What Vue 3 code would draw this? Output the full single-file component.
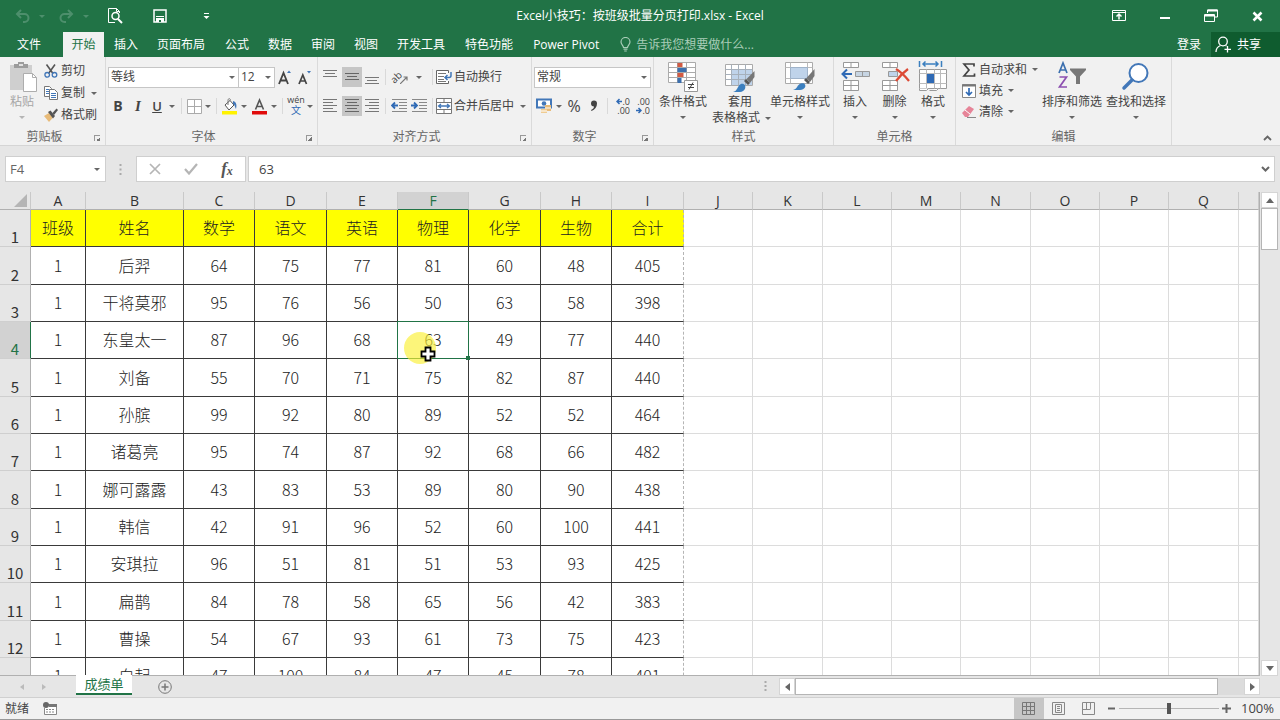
<script setup>
import { ref } from 'vue'

const tabs = ['插入', '页面布局', '公式', '数据', '审阅', '视图', '开发工具', '特色功能', 'Power Pivot']
const letters = 'ABCDEFGHIJKLMNOPQ'.split('')
const heads = ['班级', '姓名', '数学', '语文', '英语', '物理', '化学', '生物', '合计']
const rows = [
  [1, '后羿', 64, 75, 77, 81, 60, 48, 405],
  [1, '干将莫邪', 95, 76, 56, 50, 63, 58, 398],
  [1, '东皇太一', 87, 96, 68, 63, 49, 77, 440],
  [1, '刘备', 55, 70, 71, 75, 82, 87, 440],
  [1, '孙膑', 99, 92, 80, 89, 52, 52, 464],
  [1, '诸葛亮', 95, 74, 87, 92, 68, 66, 482],
  [1, '娜可露露', 43, 83, 53, 89, 80, 90, 438],
  [1, '韩信', 42, 91, 96, 52, 60, 100, 441],
  [1, '安琪拉', 96, 51, 81, 51, 53, 93, 425],
  [1, '扁鹊', 84, 78, 58, 65, 56, 42, 383],
  [1, '曹操', 54, 67, 93, 61, 73, 75, 423],
  [1, '白起', 47, 100, 84, 47, 45, 78, 401]
]
const all = [heads, ...rows]
const cellName = ref('F4')
const formula = ref('63')
const zoom = ref(50)
</script>

<template>
  <div class="app">
    <header class="title">
      <div class="quick">
        <button class="dim" aria-label="撤销"><svg width="16" height="14" viewBox="0 0 16 14"><path d="M6 1 2 5l4 4M2 5h7.500a4 4 0 0 1 0 8H8" fill="none" stroke="currentColor" stroke-width="2" /></svg></button>
        <button class="dim" aria-label="撤销选项"><i class="caret"></i></button>
        <button class="dim" aria-label="恢复"><svg width="16" height="14" viewBox="0 0 16 14"><path d="m10 1 4 4-4 4M14 5H6.500a4 4 0 0 0 0 8H8" fill="none" stroke="currentColor" stroke-width="2" /></svg></button>
        <button class="dim" aria-label="恢复选项"><i class="caret"></i></button>
        <button aria-label="打印预览"><svg width="16" height="16" viewBox="0 0 16 16" fill="none" stroke="#fff"><path d="M12.500 5V3.500L9.500.5h-8v14H8M9.500.5v3h3" /><circle cx="8.500" cy="8" r="3.500" stroke-width="1.500" /><path d="m11 11 4 4" stroke-width="2" /></svg></button>
        <button aria-label="保存"><svg width="14" height="14" viewBox="0 0 14 14"><path d="M1 1h12v12H1z" fill="none" stroke="#fff" stroke-width="1.500" /><path d="M3 7.500h8" stroke="#fff" /><path d="M3 13V9h8v4z" fill="#fff" /><path d="M6 11h2v2H6z" fill="#217346" /></svg></button>
        <button aria-label="自定义快速访问工具栏"><svg width="7" height="7" viewBox="0 0 7 7"><path d="M1 .5h5" stroke="#fff" /><path d="M.5 3h6l-3 3z" fill="#fff" /></svg></button>
      </div>
      <h1>Excel小技巧：按班级批量分页打印.xlsx - Excel</h1>
      <div class="win">
        <button aria-label="功能区显示选项"><svg width="14" height="12" viewBox="0 0 14 12" fill="none" stroke="#fff"><path d="M.5.5h13v10H.5zM.5 2.500h13" /><path d="M7 9.500V5M4.500 6.500 7 4l2.500 2.500" stroke-width="1.500" /></svg></button>
        <button aria-label="最小化"><svg width="12" height="12" viewBox="0 0 12 12"><path d="M1 8h10" stroke="#fff" stroke-width="2" /></svg></button>
        <button aria-label="还原"><svg width="14" height="14" viewBox="0 0 14 14" fill="none" stroke="#fff"><path d="M3.500 4V1h10v7h-3" /><path d="M3.500 1.500h10M1 6.500h9" stroke-width="2" /><path d="M.5 5.500h10v7H.5z" /></svg></button>
        <button aria-label="关闭"><svg width="11" height="11" viewBox="0 0 11 11"><path d="m1.500 1.500 8 8m0-8-8 8" stroke="#fff" stroke-width="2.500" /></svg></button>
      </div>
    </header>

    <nav class="tabs">
      <button class="file">文件</button>
      <button class="active">开始</button>
      <button v-for="t in tabs" :key="t" :class="{ wide: t.length > 2 }">{{ t }}</button>
      <label class="tell">
        <svg width="11" height="15" viewBox="0 0 11 15" fill="none" stroke="#a9cdb8" stroke-width="1.200"><path d="M3.500 10.500C3.500 8.500 1 7.500 1 5a4.500 4.500 0 0 1 9 0c0 2.500-2.500 3.500-2.500 5.500zM3.500 12.200h4M4.200 14h2.600" /></svg>
        <input type="text" placeholder="告诉我您想要做什么..." />
      </label>
      <button class="login">登录</button>
      <button class="share"><svg width="17" height="17" viewBox="0 0 17 17" fill="none" stroke="#fff" stroke-width="1.300"><circle cx="8" cy="5.500" r="4.300" /><path d="M1 16c0-4 2-5.500 4.500-6.500M10.500 9.500l1 .5M12.500 10v6.500M9.500 13.300h6.500" /></svg>共享</button>
    </nav>

    <section class="ribbon">
      <div class="group g-clip">
        <div class="body">
          <button class="big paste" disabled>
            <svg width="30" height="32" viewBox="0 0 30 32"><path d="M3 4h22v25H3z" fill="#cfcfcf" /><path d="M7 3h4V1h6v2h4v4H7z" fill="#9c9c9c" /><path d="M12 3h4v2h-4z" fill="#e0e0e0" /><path d="M16.500 12.500h9l4 4v14h-13z" fill="#fff" stroke="#adadad" /><path d="M25.500 12.500v4h4" fill="none" stroke="#adadad" /></svg>
            <span>粘贴</span><i class="caret"></i>
          </button>
          <div class="stack">
            <button><svg width="14" height="14" viewBox="0 0 14 14" fill="none"><path d="m2.500.5 6.500 9M11 .5l-6.500 9" stroke="#555" stroke-width="1.600" /><circle cx="3.200" cy="10.800" r="2.300" stroke="#4277b8" stroke-width="1.300" /><circle cx="10.500" cy="10.800" r="2.300" stroke="#4277b8" stroke-width="1.300" /></svg>剪切</button>
            <button><svg width="14" height="14" viewBox="0 0 14 14" fill="#fff" stroke="#777"><path d="M.5.5h5l2 2v8h-7z" /><path d="M2 3.500h3M2 5.500h3M2 7.500h3" stroke="#4277b8" /><path d="M5.500 3.500h5l3 3v7h-8z" /><path d="M7 7.500h5M7 9.500h5M7 11.500h5" stroke="#4277b8" /></svg>复制<i class="caret"></i></button>
            <button><svg width="14" height="14" viewBox="0 0 14 14"><path d="m0 8 5-3 4 4.500L5 14z" fill="#e8bb79" /><path d="m4 4 2.500-1.500 4.500 5.500-2 2.500z" fill="#555" /><path d="m8.500 5 4-4.500L14 2l-4 5z" fill="#555" /></svg>格式刷</button>
          </div>
        </div>
        <footer>剪贴板<button class="launch" aria-label="剪贴板设置"></button></footer>
      </div>

      <div class="group g-font">
        <div class="body col">
          <div class="row r-font">
            <span class="pick"><select aria-label="字体"><option>等线</option></select><i class="caret"></i></span>
            <span class="pick"><select aria-label="字号"><option>12</option></select><i class="caret"></i></span>
            <button aria-label="增大字号"><svg width="14" height="15" viewBox="0 0 14 15"><path d="M1 14 5.500 3 10 14M2.500 10.500h6" fill="none" stroke="#444" stroke-width="1.800" /><path d="m9 3 2-2.500L13 3z" fill="#4277b8" /></svg></button>
            <button aria-label="减小字号"><svg width="14" height="15" viewBox="0 0 14 15"><path d="M1 14 4.800 5 8.500 14M2.500 11h5" fill="none" stroke="#444" stroke-width="1.700" /><path d="m9 1 2 2.500L13 1z" fill="#4277b8" /></svg></button>
          </div>
          <div class="row r-style">
            <button class="b">B</button><button class="i">I</button><button class="u">U</button><button aria-label="下划线选项"><i class="caret"></i></button><hr />
            <button aria-label="边框"><svg width="15" height="15" viewBox="0 0 15 15"><path d="M.5.5h14v14H.5z" fill="#fff" stroke="#aaa" /><path d="M7.500 0v15M0 7.500h15" stroke="#aaa" /></svg></button><button aria-label="边框选项"><i class="caret"></i></button><hr />
            <button aria-label="填充颜色"><svg width="17" height="17" viewBox="0 0 17 17"><path d="M1 13h15v3.500H1z" fill="#fff200" /><path d="m4 7 5-4.500 4 4.500-5 5z" fill="#fff" stroke="#555" /><path d="M7 7V2.500C7 0 9.500 0 9.500 2.500" fill="none" stroke="#777" /><path d="M12 3c3.500 1 4 4 3 8-1-2-1.500-5-3-5z" fill="#4277b8" /></svg></button><button aria-label="填充选项"><i class="caret"></i></button>
            <button aria-label="字体颜色"><svg width="17" height="17" viewBox="0 0 17 17"><path d="M1 13h15v3.500H1z" fill="#e00b0b" /><path d="M4.500 11.500 8.500 2l4 9.500M5.500 8.500h6" fill="none" stroke="#555" stroke-width="1.600" /></svg></button><button aria-label="字体颜色选项"><i class="caret"></i></button><hr />
            <button class="wen"><span>wén</span><b>文</b></button><button aria-label="拼音选项"><i class="caret"></i></button>
          </div>
        </div>
        <footer>字体<button class="launch" aria-label="字体设置"></button></footer>
      </div>

      <div class="group g-align">
        <div class="body col">
          <div class="row r-align">
            <button aria-label="顶端对齐"><svg width="14" height="16" viewBox="0 0 14 16"><path d="M0 1.500h14M2 4.500h10M0 7.500h14" stroke="#777" /></svg></button>
            <button class="on" aria-label="垂直居中"><svg width="14" height="16" viewBox="0 0 14 16"><path d="M0 4.500h14M2 7.500h10M0 10.500h14" stroke="#666" /></svg></button>
            <button aria-label="底端对齐"><svg width="14" height="16" viewBox="0 0 14 16"><path d="M0 8.500h14M2 11.500h10M0 14.500h14" stroke="#777" /></svg></button><hr />
            <button class="ab"><span>ab</span><svg width="8" height="8" viewBox="0 0 8 8"><path d="m0 8 7-7M3.500 1H7v3.500" fill="none" stroke="#777" stroke-width="1.200" /></svg></button><button aria-label="方向选项"><i class="caret"></i></button><hr />
            <button class="txt"><svg width="16" height="16" viewBox="0 0 16 16" fill="none" stroke="#666"><path d="M12.500 4V1.500H.5v13h12V12" fill="#fff" /><path d="M2 4.500h8M2 7.500h6M2 10.500h6M2 12.500h8" stroke="#777" /><path d="M15 3v3.500q0 2-2 2H9.500M11.500 6 9 8.500l2.500 2.500" stroke="#4277b8" stroke-width="1.500" /></svg>自动换行</button>
          </div>
          <div class="row r-align">
            <button aria-label="左对齐"><svg width="14" height="16" viewBox="0 0 14 16"><path d="M0 1.500h14M0 4.500h10M0 7.500h14M0 10.500h10M0 13.500h14" stroke="#777" /></svg></button>
            <button class="on" aria-label="居中"><svg width="14" height="16" viewBox="0 0 14 16"><path d="M0 1.500h14M2 4.500h10M0 7.500h14M2 10.500h10M0 13.500h14" stroke="#666" /></svg></button>
            <button aria-label="右对齐"><svg width="14" height="16" viewBox="0 0 14 16"><path d="M0 1.500h14M4 4.500h10M0 7.500h14M4 10.500h10M0 13.500h14" stroke="#777" /></svg></button><hr />
            <button aria-label="减少缩进"><svg width="16" height="16" viewBox="0 0 16 16"><path d="M1 1.500h15M8 4.500h8M8 7.500h8M8 10.500h8M1 13.500h15" stroke="#888" /><path d="M7 7.500H1M4 4.500l-3 3 3 3" fill="none" stroke="#2f6ab5" stroke-width="1.800" /></svg></button>
            <button aria-label="增加缩进"><svg width="16" height="16" viewBox="0 0 16 16"><path d="M1 1.500h15M8 4.500h8M8 7.500h8M8 10.500h8M1 13.500h15" stroke="#888" /><path d="M0 7.500h6M3 4.500l3 3-3 3" fill="none" stroke="#2f6ab5" stroke-width="1.800" /></svg></button><hr />
            <button class="txt"><svg width="16" height="16" viewBox="0 0 16 16" fill="none" stroke="#777"><path d="M.5.5h15v15H.5z" fill="#fff" /><path d="M0 4.500h16M0 11.500h16M8 0v4.500M8 11.500V16" /><path d="M2.500 8h11M5 6 2.500 8 5 10M11 6l2.500 2-2.500 2" stroke="#4277b8" stroke-width="1.300" /></svg>合并后居中</button>
            <button aria-label="合并选项"><i class="caret"></i></button>
          </div>
        </div>
        <footer>对齐方式<button class="launch" aria-label="对齐设置"></button></footer>
      </div>

      <div class="group g-num">
        <div class="body col">
          <div class="row r-fmt"><span class="pick"><select aria-label="数字格式"><option>常规</option></select><i class="caret"></i></span></div>
          <div class="row r-num">
            <button aria-label="会计格式"><svg width="16" height="16" viewBox="0 0 16 16"><path d="M1 1.500h14v8H1z" fill="#fff" stroke="#4277b8" stroke-width="2" /><circle cx="8" cy="5.500" r="2.300" fill="#4277b8" /><path d="M9 7h6v6H9z" fill="#e8bb79" /><path d="M5 11h6v4H5z" fill="#efcb91" /><path d="M5 13h6M9 10h6" stroke="#fff" /></svg></button><button aria-label="会计格式选项"><i class="caret"></i></button>
            <button class="pct">%</button>
            <button aria-label="千位分隔"><svg width="8" height="12" viewBox="0 0 8 12"><path d="M1 3.500a3 3 0 0 1 6 0c0 3.500-2 6-5.500 7.500L1 10c2-1 3-2 3-3.500A3 3 0 0 1 1 3.500z" fill="#444" /></svg></button><hr />
            <button class="dec"><span><svg width="6" height="7" viewBox="0 0 6 7"><path d="M6 3.500H1M3.500 1 1 3.500 3.500 6" fill="none" stroke="#2f6ab5" stroke-width="1.500" /></svg>.0</span><span>.00</span></button>
            <button class="dec"><span>.00</span><span><svg width="6" height="7" viewBox="0 0 6 7"><path d="M0 3.500h5M2.500 1 5 3.500 2.500 6" fill="none" stroke="#2f6ab5" stroke-width="1.500" /></svg>.0</span></button>
          </div>
        </div>
        <footer>数字<button class="launch" aria-label="数字设置"></button></footer>
      </div>

      <div class="group g-sty">
        <div class="body">
          <button class="big"><svg width="30" height="32" viewBox="0 0 30 32"><path d="M.5 1.500h27v20H.5z" fill="#fff" stroke="#aaa" /><path d="M.5 6.500h27M.5 11.500h27M.5 16.500h27M9.500 1.500v20M18.500 1.500v20" stroke="#aaa" /><path d="M9.500 2h5v4h-5zM9.500 12h6v4h-6z" fill="#d15a43" /><path d="M9.500 7h9v4h-9zM9.500 17h4v5h-4z" fill="#3b6fae" /><path d="M16.500 19.500h13v11h-13z" fill="#fff" stroke="#999" /><path d="M20 23.500h6M20 26.500h6M25 21.500l-4 7" stroke="#444" /></svg><span>条件格式</span><i class="caret"></i></button>
          <button class="big"><svg width="30" height="32" viewBox="0 0 30 32"><path d="M.5 3.500h27v21H.5z" fill="#fff" stroke="#aaa" /><path d="M7 9h20v15H7z" fill="#bfd3ea" /><path d="M.5 8.500h27M.5 13.500h27M.5 18.500h27M6.500 3.500v21M13.500 3.500v21M20.500 3.500v21" stroke="#a6b0bb" /><path d="m29.500 10-8 8 3.500 4 4.500-6z" fill="#777" /><path d="m21 18 4 4-2 2-4-4z" fill="#555" /><path d="M8 31c4-1 4-4 6-6.500s5-2 6 0 0 6-5 6.500z" fill="#3b7fbf" /></svg><span>套用</span><span>表格格式<i class="caret"></i></span></button>
          <button class="big"><svg width="30" height="32" viewBox="0 0 30 32"><path d="M.5 1.500h27v21H.5z" fill="#fff" stroke="#aaa" /><path d="M.5 6.500h27M.5 17.500h27M5.500 1.500v21M22.500 1.500v21" stroke="#bbb" /><path d="M5.500 6.500h17v11h-17z" fill="#bfd3ea" stroke="#9fb3ca" /><path d="m29.500 8-8 9 3.500 4 4.500-6z" fill="#777" /><path d="m21 17 4 4-2 2-4-4z" fill="#555" /><path d="M8 29c4-1 4-4 6-5.500s5-2 6 0 0 5-5 5.500z" fill="#3b7fbf" /></svg><span>单元格样式</span><i class="caret"></i></button>
        </div>
        <footer>样式</footer>
      </div>

      <div class="group g-cells">
        <div class="body">
          <button class="big"><svg width="30" height="32" viewBox="0 0 30 32" fill="#fff" stroke="#999"><path d="M3.500 1.500h15v5h-15zM3.500 19.500h15v10h-15zM3.500 24.500h15M11 1.500v5M11 19.500v10" /><path d="M15.500 10.500h14v5h-14z" fill="#c7d5e3" /><path d="M22.500 10.500v5" /><path d="M12 13H3M7 8.500 2.500 13 7 17.500" fill="none" stroke="#2f6ab5" stroke-width="2" /></svg><span>插入</span><i class="caret"></i></button>
          <button class="big"><svg width="30" height="32" viewBox="0 0 30 32" fill="#fff" stroke="#999"><path d="M2.500 1.500h15v5h-15zM2.500 19.500h15v10h-15zM2.500 24.500h15M10 1.500v5M10 19.500v10" /><path d="M8.500 10.500h9v5h-9z" fill="#bfd3ea" /><path d="M16 8c5 3 9 7 13 12M28 8C24 11 19 16 16 20" fill="none" stroke="#dc4a35" stroke-width="2.200" /></svg><span>删除</span><i class="caret"></i></button>
          <button class="big"><svg width="30" height="32" viewBox="0 0 30 32" fill="#fff" stroke="#999"><path d="M1.500 8.500h27v19h-27z" /><path d="M1.500 12.500h27M1.500 22.500h27M8.500 8.500v19M16.500 8.500v19M22.500 8.500v19" stroke="#bbb" /><path d="M9 13h7v9H9z" fill="#2f6ab5" stroke="none" /><path d="M1.500 27.500v2h7l2-2M11.500 29.500h7l2-2" /><path d="M1.500 0v6M23.500 0v6M5 3h15M7.500.5 5 3l2.500 2.500M17.500.5 20 3l-2.500 2.500" fill="none" stroke="#3b7fbf" stroke-width="1.500" /></svg><span>格式</span><i class="caret"></i></button>
        </div>
        <footer>单元格</footer>
      </div>

      <div class="group g-edit">
        <div class="body">
          <div class="stack">
            <button><svg width="14" height="14" viewBox="0 0 14 14"><path d="M12 3.500V1H2l5 6-5 6h10.500v-2.500" fill="none" stroke="#444" stroke-width="1.700" /></svg>自动求和<i class="caret far"></i></button>
            <button><svg width="14" height="14" viewBox="0 0 14 14"><path d="M.5.5h13v13H.5z" fill="#fff" stroke="#888" /><path d="M0 1.500h14" stroke="#777" stroke-width="2" /><path d="M7 4v7M4 8l3 3 3-3" fill="none" stroke="#2f6ab5" stroke-width="1.700" /></svg>填充<i class="caret"></i></button>
            <button><svg width="14" height="14" viewBox="0 0 14 14"><path d="m0 8 7-7 5 3-6 8H3z" fill="#e68498" /><path d="m3 5 5 4" stroke="#fff" /><path d="M5 12.500h9" stroke="#888" /></svg>清除<i class="caret"></i></button>
          </div>
          <button class="big"><svg width="30" height="32" viewBox="0 0 30 32"><path d="M2 12 6 2l4 10M3.500 9h5" fill="none" stroke="#3b6fae" stroke-width="1.700" /><path d="M2.500 16h7L2.500 26h7.500" fill="none" stroke="#8c4fb0" stroke-width="1.700" /><path d="M13 7.500h16v1.500l-6 6.500V23h-4v-7.500L13 9z" fill="#777" /></svg><span>排序和筛选</span><i class="caret"></i></button>
          <button class="big"><svg width="30" height="32" viewBox="0 0 30 32"><circle cx="17.500" cy="12" r="9" fill="#fff" stroke="#4277b8" stroke-width="2" /><path d="m11 19-8 8" stroke="#4277b8" stroke-width="3.500" stroke-linecap="round" /></svg><span>查找和选择</span><i class="caret"></i></button>
        </div>
        <footer>编辑</footer>
      </div>
      <button class="collapse" aria-label="折叠功能区"><svg width="9" height="6" viewBox="0 0 9 6"><path d="M1 5 4.500 1.500 8 5" fill="none" stroke="#666" stroke-width="1.800" /></svg></button>
    </section>

    <section class="fbar">
      <div class="name"><input v-model="cellName" aria-label="名称框" /><button aria-label="名称列表"><i class="caret"></i></button></div>
      <svg class="dots" width="3" height="13" viewBox="0 0 3 13"><path d="M.5 1h2v2h-2zM.5 5.500h2v2h-2zM.5 10h2v2h-2z" fill="#aaa" /></svg>
      <div class="fx">
        <button aria-label="取消"><svg width="12" height="12" viewBox="0 0 12 12"><path d="m1 1 10 10M11 1 1 11" stroke="#b5b5b5" stroke-width="1.700" /></svg></button>
        <button aria-label="输入"><svg width="14" height="12" viewBox="0 0 14 12"><path d="m1 6 4 4.500L13 1" fill="none" stroke="#b5b5b5" stroke-width="2.200" /></svg></button>
        <button class="fn">f<small>x</small></button>
      </div>
      <div class="formula"><input v-model="formula" aria-label="编辑栏" /><button aria-label="展开编辑栏"><svg width="9" height="6" viewBox="0 0 9 6"><path d="M1 1 4.500 4.500 8 1" fill="none" stroke="#666" stroke-width="2" /></svg></button></div>
    </section>

    <main class="work">
      <div class="sheet">
        <table>
          <colgroup><col class="c-num" /><col class="c-a" /><col class="c-b" /><col v-for="n in 7" :key="n" class="c-s" :class="{ plus: n === 2 || n === 5 || n === 7 }" /><col v-for="n in 8" :key="'e' + n" class="c-e" :class="{ plus: n === 2 || n === 5 || n === 8 }" /><col /></colgroup>
          <thead><tr>
            <th class="corner"><svg width="14" height="13" viewBox="0 0 14 13"><path d="M13 0v13H0z" fill="#b5b5b5" /></svg></th>
            <th v-for="l in letters" :key="l" :class="{ sel: l === 'F' }">{{ l }}</th><th></th>
          </tr></thead>
          <tbody>
            <tr v-for="(r, ri) in all" :key="ri" :class="{ top: ri === 0 }">
              <th :class="{ sel: ri === 3 }">{{ ri < 12 ? ri + 1 : '' }}</th>
              <td v-for="(v, ci) in r" :key="ci" class="d">{{ v }}<template v-if="ri === 3 && ci === 5"><span class="pickbox"></span><span class="halo"></span><svg class="cross" width="16" height="16" viewBox="0 0 16 16"><path d="M5.500 1.500h5v4h4v5h-4v4h-5v-4h-4v-5h4z" fill="#fff" stroke="#000" stroke-width="1.800" /></svg></template></td>
              <td v-for="n in 9" :key="'x' + n"></td>
            </tr>
          </tbody>
        </table>
      </div>
      <div class="vbar"><button aria-label="向上滚动"><svg width="8" height="5" viewBox="0 0 8 5"><path d="m0 5 4-5 4 5z" fill="#666" /></svg></button><div class="vthumb"></div><button class="down" aria-label="向下滚动"><svg width="8" height="5" viewBox="0 0 8 5"><path d="m0 0 4 5 4-5z" fill="#666" /></svg></button></div>
    </main>

    <section class="sheets">
      <button class="nav" aria-label="上一个工作表"><svg width="4" height="6" viewBox="0 0 4 6"><path d="M4 0v6L0 3z" fill="#bbb" /></svg></button>
      <button class="nav" aria-label="下一个工作表"><svg width="4" height="6" viewBox="0 0 4 6"><path d="M0 0v6l4-3z" fill="#bbb" /></svg></button>
      <button class="tab">成绩单</button>
      <button class="add" aria-label="新工作表"><svg width="14" height="14" viewBox="0 0 14 14" fill="none" stroke="#777"><circle cx="7" cy="7" r="6.300" /><path d="M7 3.500v7M3.500 7h7" stroke-width="1.500" /></svg></button>
      <svg class="dots2" width="3" height="11" viewBox="0 0 3 11"><path d="M.5 0h2v2h-2zM.5 4h2v2h-2zM.5 8h2v2h-2z" fill="#aaa" /></svg>
      <div class="hbar"><button aria-label="向左滚动"><svg width="5" height="8" viewBox="0 0 5 8"><path d="M5 0v8L0 4z" fill="#666" /></svg></button><div class="hthumb"></div><button class="right" aria-label="向右滚动"><svg width="5" height="8" viewBox="0 0 5 8"><path d="M0 0v8l5-4z" fill="#666" /></svg></button></div>
    </section>

    <footer class="status">
      <span class="ready">就绪</span>
      <button aria-label="录制宏"><svg width="14" height="13" viewBox="0 0 14 13"><path d="M3.500 2.500h10v10h-12V6" fill="#fff" stroke="#888" /><path d="M6 3.500h8" stroke="#777" stroke-width="3" /><path d="M3 7.500h9M3 10h9" stroke="#888" stroke-dasharray="2 1" /><circle cx="3" cy="3" r="3" fill="#666" /></svg></button>
      <div class="views">
        <button class="on" aria-label="普通"><svg width="13" height="13" viewBox="0 0 13 13"><path d="M.5.5h12v12H.5zM4.500 0v13M8.500 0v13M0 4.500h13M0 8.500h13" fill="none" stroke="#777" /></svg></button>
        <button aria-label="页面布局视图"><svg width="13" height="13" viewBox="0 0 13 13"><path d="M.5.5h12v12H.5zM3.500 2.500h6v8h-6zM5 4.500h3M5 6.500h3M5 8.500h3" fill="none" stroke="#888" /></svg></button>
        <button aria-label="分页预览"><svg width="13" height="13" viewBox="0 0 13 13"><path d="M.5.5h12v12H.5zM4.500 0v7M8.500 0v7M.5 7.500h8" fill="none" stroke="#888" /></svg></button>
      </div>
      <button class="step" aria-label="缩小"><svg width="9" height="9" viewBox="0 0 9 9"><path d="M1 4.500h7" stroke="#666" stroke-width="2" /></svg></button>
      <input v-model="zoom" type="range" min="0" max="100" aria-label="显示比例" />
      <button class="step" aria-label="放大"><svg width="9" height="9" viewBox="0 0 9 9"><path d="M0 4.500h9M4.500 0v9" stroke="#666" stroke-width="2" /></svg></button>
      <button class="percent">100%</button>
    </footer>
  </div>
</template>

<style>
body { margin: 0; overflow: hidden; }
</style>

<style scoped>
* { box-sizing: border-box; }
.app { height: 100vh; display: flex; flex-direction: column; background: #e6e6e6; color: #444; font: 12px/16px "Open Sans", "Noto Sans CJK SC", sans-serif; overflow: hidden; }
button { display: flex; align-items: center; justify-content: center; padding: 0; margin: 0; border: 0; background: none; color: inherit; font: inherit; white-space: nowrap; }
input, select { font: inherit; color: inherit; border: 0; outline: 0; padding: 0; margin: 0; background: transparent; min-width: 0; }
svg { display: block; flex: none; }
.caret { flex: none; display: inline-block; border: 3px solid transparent; border-top-color: #666; border-bottom: 0; }

.title { flex: none; height: 32px; display: grid; grid-template-columns: 1fr auto 1fr; align-items: center; background: #217346; color: #fff; }
.title h1 { margin: 0; font-size: 12px; font-weight: 400; }
.quick { display: grid; grid-template-columns: 18px 20px 28px 12px 46px 44px 48px; padding-left: 14px; }
.dim { color: #4d8f6c; }
.dim .caret { border-top-color: #4d8f6c; }
.win { justify-self: end; display: flex; }
.win button { width: 46px; height: 32px; }

.tabs { flex: none; height: 25px; display: flex; align-items: stretch; background: #217346; color: #fff; }
.tabs button { padding: 0 9px 0 10px; }
.tabs .wide { padding: 0 10px; }
.tabs .file { width: 63px; padding: 0 5px 0 0; }
.tabs .active { width: 41px; padding: 0; background: #f1f1f1; color: #217346; }
.tell { flex: 1; display: flex; align-items: center; gap: 5px; margin-left: 11px; }
.tell input { flex: 1; }
.tell input::placeholder { color: #a9cdb8; opacity: 1; }
.tabs .login { padding: 0 10px; }
.tabs .share { width: 69px; gap: 5px; padding: 0 15px 0 0; background: #0f5c2f; }

.ribbon { flex: none; height: 89px; display: flex; background: #f1f1f1; border-bottom: 1px solid #d5d5d5; }
.group { flex: none; display: flex; flex-direction: column; border-right: 1px solid #dadada; }
.group > footer { position: relative; height: 18px; display: flex; align-items: center; justify-content: center; color: #666; padding-right: 16px; }
.g-sty > footer, .g-cells > footer, .g-edit > footer { padding-right: 0; }
.body { height: 70px; display: flex; }
.group > footer { padding-top: 1px; }
.g-clip { width: 106px; }
.g-font { width: 212px; }
.g-align { width: 214px; }
.g-num { width: 122px; }
.g-sty { width: 180px; }
.g-cells { width: 122px; }
.g-edit { width: 216px; }
.launch { position: absolute; right: 5px; bottom: 4px; width: 6px; height: 6px; border-left: 1px solid #999; border-top: 1px solid #999; background: linear-gradient(135deg, transparent 60%, #777 60%); }
.big { flex-direction: column; justify-content: flex-start; padding-top: 4px; }
.big span { line-height: 16px; }
.big svg + span { padding-top: 1px; }
.big .caret { margin-top: 6px; }
.big span .caret { margin: 0 0 2px 5px; }
.big span:has(.caret) { padding-left: 3px; }
.paste { width: 44px; color: #a6a6a6; }
.paste .caret { border-top-color: #b5b5b5; }
.stack { display: grid; grid-template-rows: 22px 22px 22px; padding-top: 3px; justify-items: start; align-content: start; }
.stack button { gap: 3px; }
.stack .caret { margin-left: 3px; }
.stack .far { margin-left: 3px; }
.g-sty .body { display: grid; grid-template-columns: 58px 56px 64px; }
.g-cells .body { display: grid; grid-template-columns: 42px 37px 40px; }
.g-edit .body { display: grid; grid-template-columns: 84px 64px 64px; }
.g-edit .stack { padding: 2px 0 0 6px; grid-template-rows: 21px 21px 21px; }
.g-edit .stack .caret { margin-left: 2px; }
.col { flex-direction: column; gap: 7px; padding-top: 9px; }
.row { display: grid; height: 22px; align-items: center; }
.row button { height: 20px; }
.row hr { width: 1px; height: 16px; margin: 0 auto; border: 0; background: #d9d9d9; }
.r-font { grid-template-columns: 131px 36px 20px 20px; padding-left: 2px; }
.pick { position: relative; height: 21px; display: flex; align-items: center; border: 1px solid #c6c6c6; background: #fff; }
.pick + .pick { border-left: 0; }
.pick select { width: 100%; height: 19px; appearance: none; padding-left: 2px; }
.pick .caret { position: absolute; right: 3px; pointer-events: none; }
.r-style { grid-template-columns: 20px 20px 18px 12px 7px 18px 10px 7px 19px 10px 20px 9px 9px 18px 10px; padding-left: 2px; }
.b { font-weight: 700; font-size: 14px; }
.i { font: italic 700 15px/16px "Liberation Serif", serif; }
.u { font-weight: 600; font-size: 13px; text-decoration: underline; }
.wen { flex-direction: column; }
.wen span { font-size: 9px; line-height: 8px; }
.wen b { font-weight: 400; font-size: 10px; line-height: 12px; color: #2f6ab5; }
.r-align { grid-template-columns: 24px 20px 20px 7px 20px 20px 7px; grid-auto-flow: column; grid-auto-columns: max-content; justify-content: start; }
.on { background: #c6c6c6; }
.txt { gap: 2px; }
.txt + button { width: 18px; }
.ab { position: relative; }
.ab span { font-size: 10px; transform: rotate(-45deg); margin-left: -6px; }
.ab svg { position: absolute; right: 1px; bottom: 3px; }
.r-fmt { padding: 0 2px; }
.r-num { grid-template-columns: 21px 10px 20px 20px 6px 20px 20px; padding-left: 1px; }
.pct { font-size: 16px; }
.dec { flex-direction: column; align-items: flex-end; }
.dec span { display: flex; align-items: center; font-size: 9px; line-height: 9px; }
.collapse { margin: auto 8px 4px auto; }

.fbar { flex: none; height: 46px; display: flex; align-items: center; padding: 0 5px; }
.name, .fx, .formula { display: flex; height: 26px; border: 1px solid #cfcfcf; background: #fff; }
.name { width: 101px; padding: 0 5px 0 4px; color: #666; font-size: 13px; }
.name input { flex: 1; }
.dots { margin: 0 14px 0 13px; }
.fx { width: 110px; margin-right: 2px; }
.fx button { width: 36px; }
.fn { font: italic 700 17px/20px "Liberation Serif", serif; color: #555; }
.fn small { font-size: 12px; margin-top: 4px; }
.formula { flex: 1; padding: 0 4px 0 10px; font-size: 13px; }
.formula input { flex: 1; }

.work { flex: 1; min-height: 0; display: flex; }
.sheet { flex: 1; min-width: 0; overflow: hidden; border-right: 1px solid #b0b0b0; border-bottom: 1px solid #b0b0b0; }
table { width: 100%; table-layout: fixed; border-collapse: separate; border-spacing: 0; background: #fff; font-family: "Noto Sans CJK SC", sans-serif; }
.c-num { width: 31px; }
.c-a { width: 55px; }
.c-b { width: 98px; }
.c-s { width: 71px; }
.c-s.plus { width: 72px; }
.c-e { width: 69px; }
.c-e.plus { width: 70px; }
th { padding: 0; font-weight: 400; color: #333; background: #e6e6e6; }
thead th { height: 18px; font: 14px/16px "Open Sans", sans-serif; border-right: 1px solid #c9c9c9; border-bottom: 1px solid #b0b0b0; }
thead .sel { background: #d2d2d2; color: #217346; border-bottom-color: #217346; }
.corner svg { margin-left: auto; margin-right: 2px; }
tbody th { vertical-align: bottom; padding-bottom: 1px; font-size: 15px; line-height: 17px; border-right: 1px solid #b0b0b0; border-bottom: 1px solid #cfcfcf; }
tbody .sel { background: #d2d2d2; color: #217346; border-right-color: #217346; }
tbody tr { height: 37px; }
tbody tr:nth-child(3n + 2) { height: 38px; }
td { position: relative; padding: 0 0 2px; border-right: 1px solid #dcdcdc; border-bottom: 1px solid #dcdcdc; text-align: center; font-size: 16px; line-height: 20px; color: #222; font-weight: 300; }
.d { border-color: #3a3a3a; }
.d:nth-child(10) { border-right: 1px dashed #b5b5b5; }
.top .d { background: #ff0; }
.pickbox { position: absolute; z-index: 1; inset: -1px; border: 1px solid #217346; }
.pickbox::after { content: ""; position: absolute; right: -2px; bottom: -2px; width: 4px; height: 4px; background: #217346; }
.halo { position: absolute; z-index: 2; left: 6px; top: 10px; width: 32px; height: 32px; border-radius: 50%; background: rgba(250, 240, 50, 0.65); }
.cross { position: absolute; z-index: 3; left: 22px; top: 24px; }

.vbar { flex: none; width: 20px; display: flex; flex-direction: column; align-items: flex-start; padding-left: 1px; background: #e6e6e6; }
.vbar button { width: 17px; height: 16px; background: #fff; border: 1px solid #d5d5d5; }
.vthumb { width: 17px; height: 42px; background: #fff; border: 1px solid #b5b5b5; }
.vbar .down { margin-top: auto; }

.sheets { flex: none; height: 21px; display: flex; align-items: center; padding-right: 20px; }
.nav { width: 21px; }
.nav:first-child { width: 35px; padding-left: 9px; }
.nav + .nav { width: 17px; }
.tab { align-self: flex-start; height: 20px; width: 56px; margin: -1px 0 0 24px; position: relative; background: #fff; color: #217346; border-bottom: 2px solid #217346; font-size: 13px; }
.add { margin-left: 26px; }
.dots2 { margin-left: auto; margin-right: 12px; }
.hbar { flex: 0 1 481px; display: flex; height: 17px; background: #dcdcdc; }
.hbar button { width: 16px; background: #fff; border: 1px solid #d5d5d5; }
.hthumb { flex: 0 1 423px; background: #fff; border: 1px solid #b5b5b5; }
.hbar .right { margin-left: auto; }

.status { flex: none; height: 23px; display: flex; align-items: stretch; padding: 0 6px 0 5px; background: #f1f1f1; border-top: 1px solid #d0d0d0; border-bottom: 1px solid #999; line-height: 21px; }
.status > button { margin-left: 14px; }
.views { display: flex; margin-left: auto; }
.views button { width: 30px; }
.status .step { width: 15px; margin: 0; }
.status input { width: 100px; height: 21px; appearance: none; }
.status input::-webkit-slider-runnable-track { height: 11px; background: linear-gradient(#b5b5b5, #b5b5b5) center / 100% 1px no-repeat; }
.status input::-webkit-slider-thumb { appearance: none; width: 4px; height: 11px; background: #555; }
.status .percent { margin-left: 7px; font-size: 13px; }
</style>
